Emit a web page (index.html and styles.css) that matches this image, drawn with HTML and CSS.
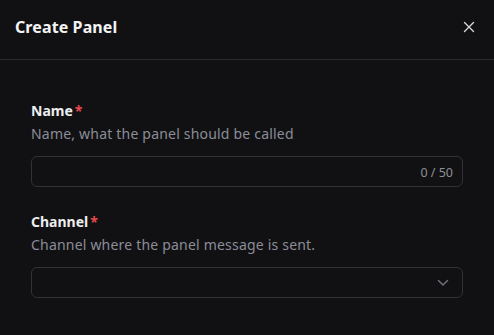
FILE: index.html
```html
<!DOCTYPE html>
<html lang="en">
<head>
    <meta charset="UTF-8">
    <meta name="viewport" content="width=device-width, initial-scale=1.0">
    <title>Create Panel</title>
    <link rel="stylesheet" href="styles.css">
</head>
<body>
    <div class="modal">
        <div class="modal-header">
            <h1>Create Panel</h1>
            <button class="close-btn" aria-label="Close">
                <svg width="12" height="12" viewBox="0 0 12 12" fill="none" stroke="currentColor" stroke-width="1.4" stroke-linecap="round">
                    <path d="M1.5 1.5l9 9M10.5 1.5l-9 9"/>
                </svg>
            </button>
        </div>
        <form class="modal-body">
            <div class="form-group">
                <label for="panel-name">Name<span class="req">*</span></label>
                <p class="hint">Name, what the panel should be called</p>
                <div class="field">
                    <input type="text" id="panel-name" maxlength="50">
                    <span class="counter">0 / 50</span>
                </div>
            </div>
            <div class="form-group">
                <label for="panel-channel">Channel<span class="req">*</span></label>
                <p class="hint">Channel where the panel message is sent.</p>
                <div class="field select">
                    <select id="panel-channel"></select>
                    <svg class="chevron" width="12" height="8" viewBox="0 0 12 8" fill="none" stroke="currentColor" stroke-width="1.5" stroke-linecap="round" stroke-linejoin="round">
                        <path d="M1.5 1.5l4.5 4.5 4.5-4.5"/>
                    </svg>
                </div>
            </div>
        </form>
    </div>
</body>
</html>
```

FILE: styles.css
```css
* {
    margin: 0;
    padding: 0;
    box-sizing: border-box;
}

body {
    font-family: "Noto Sans", Arial, sans-serif;
    background-color: #111113;
    color: #ededef;
    width: 494px;
    height: 335px;
    overflow: hidden;
}

.modal-header {
    display: flex;
    align-items: center;
    justify-content: space-between;
    height: 60px;
    padding: 0 19px 6px 15px;
    border-bottom: 1px solid #2b2b2f;
}

h1 {
    font-size: 16px;
    font-weight: 700;
    color: #f4f4f5;
    letter-spacing: 0.1px;
}

.close-btn {
    background: none;
    border: none;
    color: #d6d6d9;
    display: flex;
    cursor: pointer;
}

.modal-body {
    padding: 41px 31px 0 31px;
}

.form-group {
    margin-bottom: 25px;
}

label {
    display: block;
    font-size: 14px;
    font-weight: 700;
    color: #ededef;
    line-height: 20px;
}

.req {
    color: #e5484d;
    margin-left: 2px;
}

.hint {
    font-size: 14px;
    color: #8b8d98;
    line-height: 20px;
    margin-top: 3px;
    letter-spacing: 0.2px;
}

.field {
    position: relative;
    margin-top: 12px;
    width: 432px;
    height: 31px;
}

.field input,
.field select {
    width: 100%;
    height: 100%;
    background: transparent;
    border: 1px solid #313136;
    border-radius: 6px;
    color: #ededef;
    font-family: inherit;
    font-size: 14px;
    padding: 0 56px 0 10px;
    outline: none;
    appearance: none;
}

.counter {
    position: absolute;
    right: 10px;
    top: 50%;
    transform: translateY(-50%);
    font-size: 12.5px;
    color: #8e8f96;
}

.chevron {
    position: absolute;
    right: 14px;
    top: 12px;
    color: #6e6f78;
}
```
